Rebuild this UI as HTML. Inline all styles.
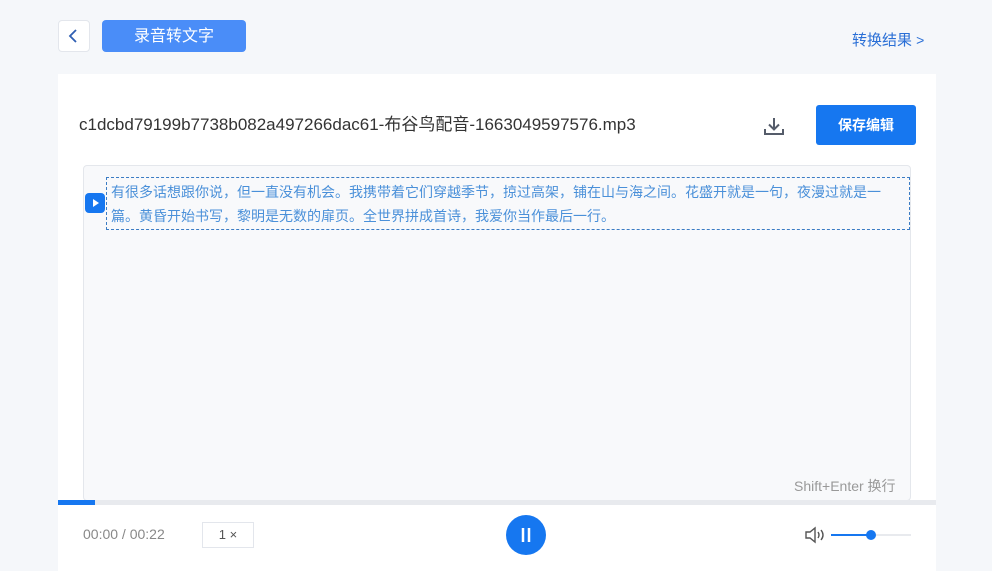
<!DOCTYPE html>
<html><head><meta charset="utf-8"><style>
*{margin:0;padding:0;box-sizing:border-box}
body{width:992px;height:571px;background:#f5f7fa;font-family:"Liberation Sans","Noto Sans CJK SC",sans-serif;position:relative;overflow:hidden}
.abs{position:absolute}
</style></head><body>
<div class="abs" style="left:58px;top:20px;width:32px;height:32px;background:#fff;border:1px solid #e3e6ec;border-radius:4px">
<svg width="30" height="30" viewBox="0 0 30 30"><path d="M17 9l-6 6 6 6" fill="none" stroke="#2f5fb3" stroke-width="1.8"/></svg></div>
<div class="abs" style="left:102px;top:20px;width:144px;height:32px;background:#4a8df8;border-radius:4px;color:#fff;font-size:16px;line-height:33px;text-align:center">录音转文字</div>
<div class="abs" style="left:852px;top:30px;color:#2a6fd6;font-size:15px;line-height:20px">转换结果 <span style="font-size:14px">&gt;</span></div>
<div class="abs" style="left:58px;top:74px;width:878px;height:497px;background:#fff"></div>
<div class="abs" style="left:79px;top:115px;font-size:17px;color:#333;line-height:20px">c1dcbd79199b7738b082a497266dac61-布谷鸟配音-1663049597576.mp3</div>
<svg class="abs" style="left:763px;top:115px" width="22" height="22" viewBox="0 0 22 22"><path d="M11 3v11M6 9.5l5 5 5-5M2 14v5h18v-5" fill="none" stroke="#555c6a" stroke-width="2"/></svg>
<div class="abs" style="left:816px;top:105px;width:100px;height:40px;background:#1677f0;border-radius:3px;color:#fff;font-size:14px;font-weight:bold;line-height:40px;text-align:center">保存编辑</div>
<div class="abs" style="left:83px;top:165px;width:828px;height:336px;background:#f8f9fb;border:1px solid #e4e7ec;border-radius:4px"></div>
<div class="abs" style="left:85px;top:193px;width:20px;height:20px;background:#1677f0;border-radius:4px"><svg width="20" height="20"><path d="M8 6l6 4-6 4z" fill="#fff"/></svg></div>
<div class="abs" style="left:106px;top:177px;width:804px;height:53px;border:1px dashed #3b7cc4;padding:2px 4px;color:#4a90d9;font-size:14px;line-height:24px">有很多话想跟你说，但一直没有机会。我携带着它们穿越季节，掠过高架，铺在山与海之间。花盛开就是一句，夜漫过就是一篇。黄昏开始书写，黎明是无数的扉页。全世界拼成首诗，我爱你当作最后一行。</div>
<div class="abs" style="left:794px;top:476px;color:#999;font-size:14px">Shift+Enter 换行</div>
<div class="abs" style="left:58px;top:500px;width:878px;height:5px;background:#e8eaee"></div>
<div class="abs" style="left:58px;top:500px;width:37px;height:5px;background:#1677f0"></div>
<div class="abs" style="left:83px;top:526px;color:#888;font-size:14px">00:00 / 00:22</div>
<div class="abs" style="left:202px;top:522px;width:52px;height:26px;border:1px solid #e3e6ec;color:#555;font-size:13px;line-height:24px;text-align:center">1 ×</div>
<div class="abs" style="left:506px;top:515px;width:40px;height:40px;background:#1677f0;border-radius:50%"><svg width="40" height="40"><path d="M17 13v14M23 13v14" stroke="#fff" stroke-width="2.5"/></svg></div>
<svg class="abs" style="left:804px;top:526px" width="22" height="18" viewBox="0 0 22 18"><path d="M2 6h4l5-4v14l-5-4H2z" fill="none" stroke="#555" stroke-width="1.4"/><path d="M14 6q2 3 0 6M17 4q4 5 0 10" fill="none" stroke="#555" stroke-width="1.4"/></svg>
<div class="abs" style="left:831px;top:534px;width:80px;height:2px;background:#e8eaee"></div>
<div class="abs" style="left:831px;top:534px;width:40px;height:2px;background:#1677f0"></div>
<div class="abs" style="left:866px;top:530px;width:10px;height:10px;background:#1677f0;border-radius:50%"></div>
</body></html>
